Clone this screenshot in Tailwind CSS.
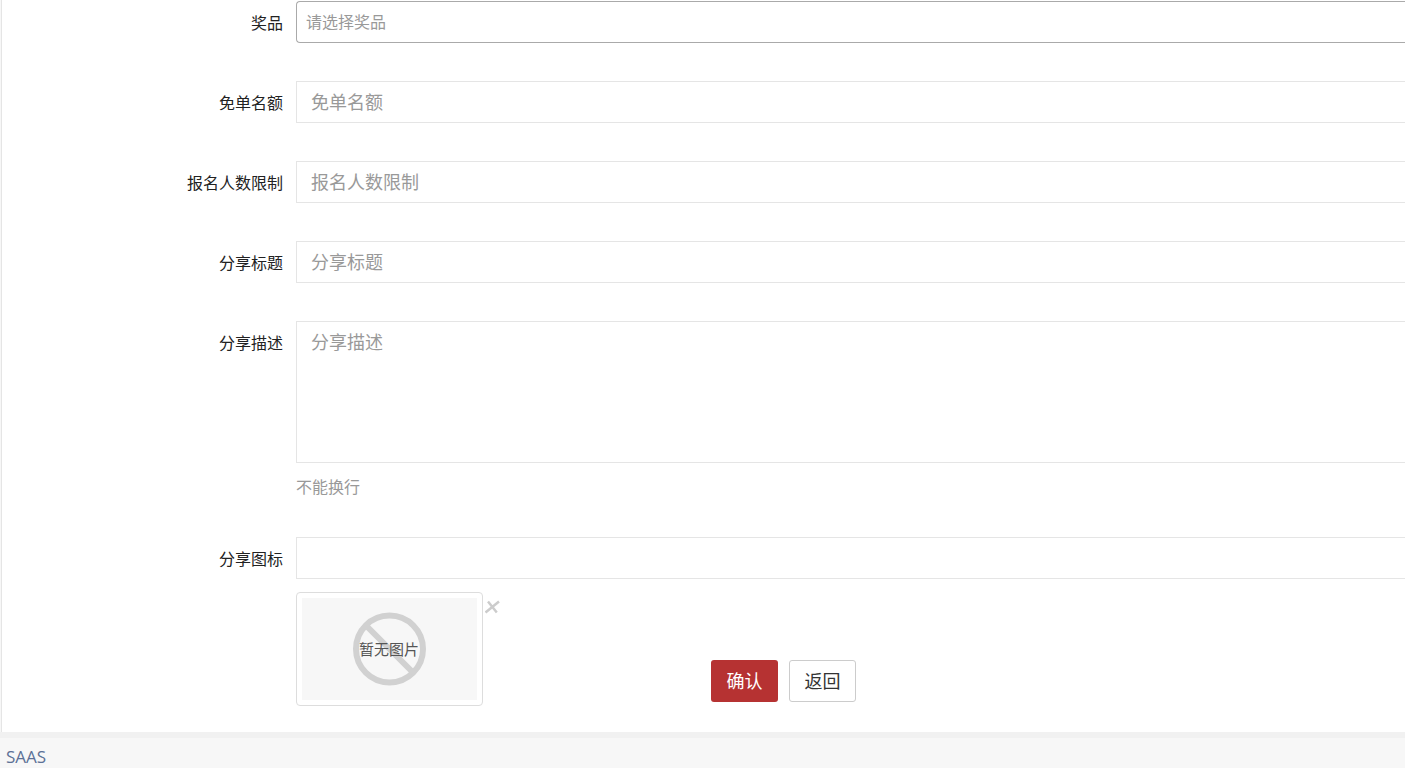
<!DOCTYPE html>
<html lang="zh-CN">
<head>
<meta charset="utf-8">
<meta name="viewport" content="width=device-width, initial-scale=1">
<title>SAAS</title>
<script src="https://cdn.jsdelivr.net/npm/@tailwindcss/browser@4"></script>
</head>
<body class="min-h-screen overflow-x-hidden bg-[#f7f7f7] font-['Open_Sans','Noto_Sans_CJK_SC',sans-serif] text-base text-[#222]">
<main class="ml-px border-l border-[#e5e5e5] bg-white pt-px pb-[26px]">
<form class="flex flex-col gap-[38px]">
  <div class="flex gap-[13px]">
    <label for="prize" class="w-[281px] shrink-0 pt-[10px] text-right leading-6">奖品</label>
    <select id="prize" class="h-[42px] min-w-0 flex-1 appearance-none rounded-l border border-r-0 border-[#aaa] bg-white px-[9px] text-base text-[#999]">
      <option>请选择奖品</option>
    </select>
  </div>
  <div class="flex gap-[13px]">
    <label for="quota" class="w-[281px] shrink-0 pt-[10px] text-right leading-6">免单名额</label>
    <input id="quota" type="text" placeholder="免单名额" class="h-[42px] min-w-0 flex-1 border border-r-0 border-[#e5e5e5] bg-white px-[14px] text-lg placeholder:text-[#999]">
  </div>
  <div class="flex gap-[13px]">
    <label for="limit" class="w-[281px] shrink-0 pt-[10px] text-right leading-6">报名人数限制</label>
    <input id="limit" type="text" placeholder="报名人数限制" class="h-[42px] min-w-0 flex-1 border border-r-0 border-[#e5e5e5] bg-white px-[14px] text-lg placeholder:text-[#999]">
  </div>
  <div class="flex gap-[13px]">
    <label for="title" class="w-[281px] shrink-0 pt-[10px] text-right leading-6">分享标题</label>
    <input id="title" type="text" placeholder="分享标题" class="h-[42px] min-w-0 flex-1 border border-r-0 border-[#e5e5e5] bg-white px-[14px] text-lg placeholder:text-[#999]">
  </div>
  <div class="flex gap-[13px]">
    <label for="desc" class="w-[281px] shrink-0 pt-[10px] text-right leading-6">分享描述</label>
    <div class="min-w-0 flex-1">
      <textarea id="desc" placeholder="分享描述" class="block h-[142px] w-full resize-none border border-r-0 border-[#e5e5e5] bg-white px-[14px] py-[6px] text-lg leading-7 placeholder:text-[#999]"></textarea>
      <p class="mt-3 leading-6 text-[#999]">不能换行</p>
    </div>
  </div>
  <div class="flex gap-[13px]">
    <label for="icon" class="w-[281px] shrink-0 pt-[10px] text-right leading-6">分享图标</label>
    <div class="min-w-0 flex-1">
      <input id="icon" type="text" class="block h-[42px] w-full border border-r-0 border-[#e5e5e5] bg-white px-[14px] text-lg">
      <div class="mt-[13px] flex items-end">
        <div class="rounded border border-[#ddd] bg-white p-[5px]">
          <svg width="175" height="102" viewBox="0 0 175 102" class="block bg-[#f7f7f7]" role="img" aria-label="暂无图片">
            <circle cx="87.500" cy="51" r="33.500" fill="none" stroke="#d1d1d1" stroke-width="6"/>
            <path d="M64 27.500 111 74.500" stroke="#d1d1d1" stroke-width="6"/>
            <text x="87" y="57" text-anchor="middle" font-size="15" fill="#555">暂无图片</text>
          </svg>
        </div>
        <button type="button" aria-label="删除" class="ml-[2px] mt-2 self-start">
          <svg width="15" height="14" viewBox="0 0 15 14" class="block" fill="none" stroke="#ccc" stroke-width="2.500"><path d="M.5 12.500 14 1.500M3 1.500 11.800 12.500"/></svg>
        </button>
        <div class="mb-1 ml-[211px] flex gap-[11px]">
          <button type="submit" class="h-[42px] w-[67px] rounded-[3px] bg-[#b63232] text-lg text-white">确认</button>
          <button type="button" class="h-[42px] w-[67px] rounded-[3px] border border-[#ccc] bg-white text-lg text-[#333]">返回</button>
        </div>
      </div>
    </div>
  </div>
</form>
</main>
<footer class="border-t-[6px] border-[#f1f1f1] px-[6px] pt-[7px] leading-6">
  <a href="#" class="text-[17px] text-[#5c7196]">SAAS</a>
</footer>
</body>
</html>
